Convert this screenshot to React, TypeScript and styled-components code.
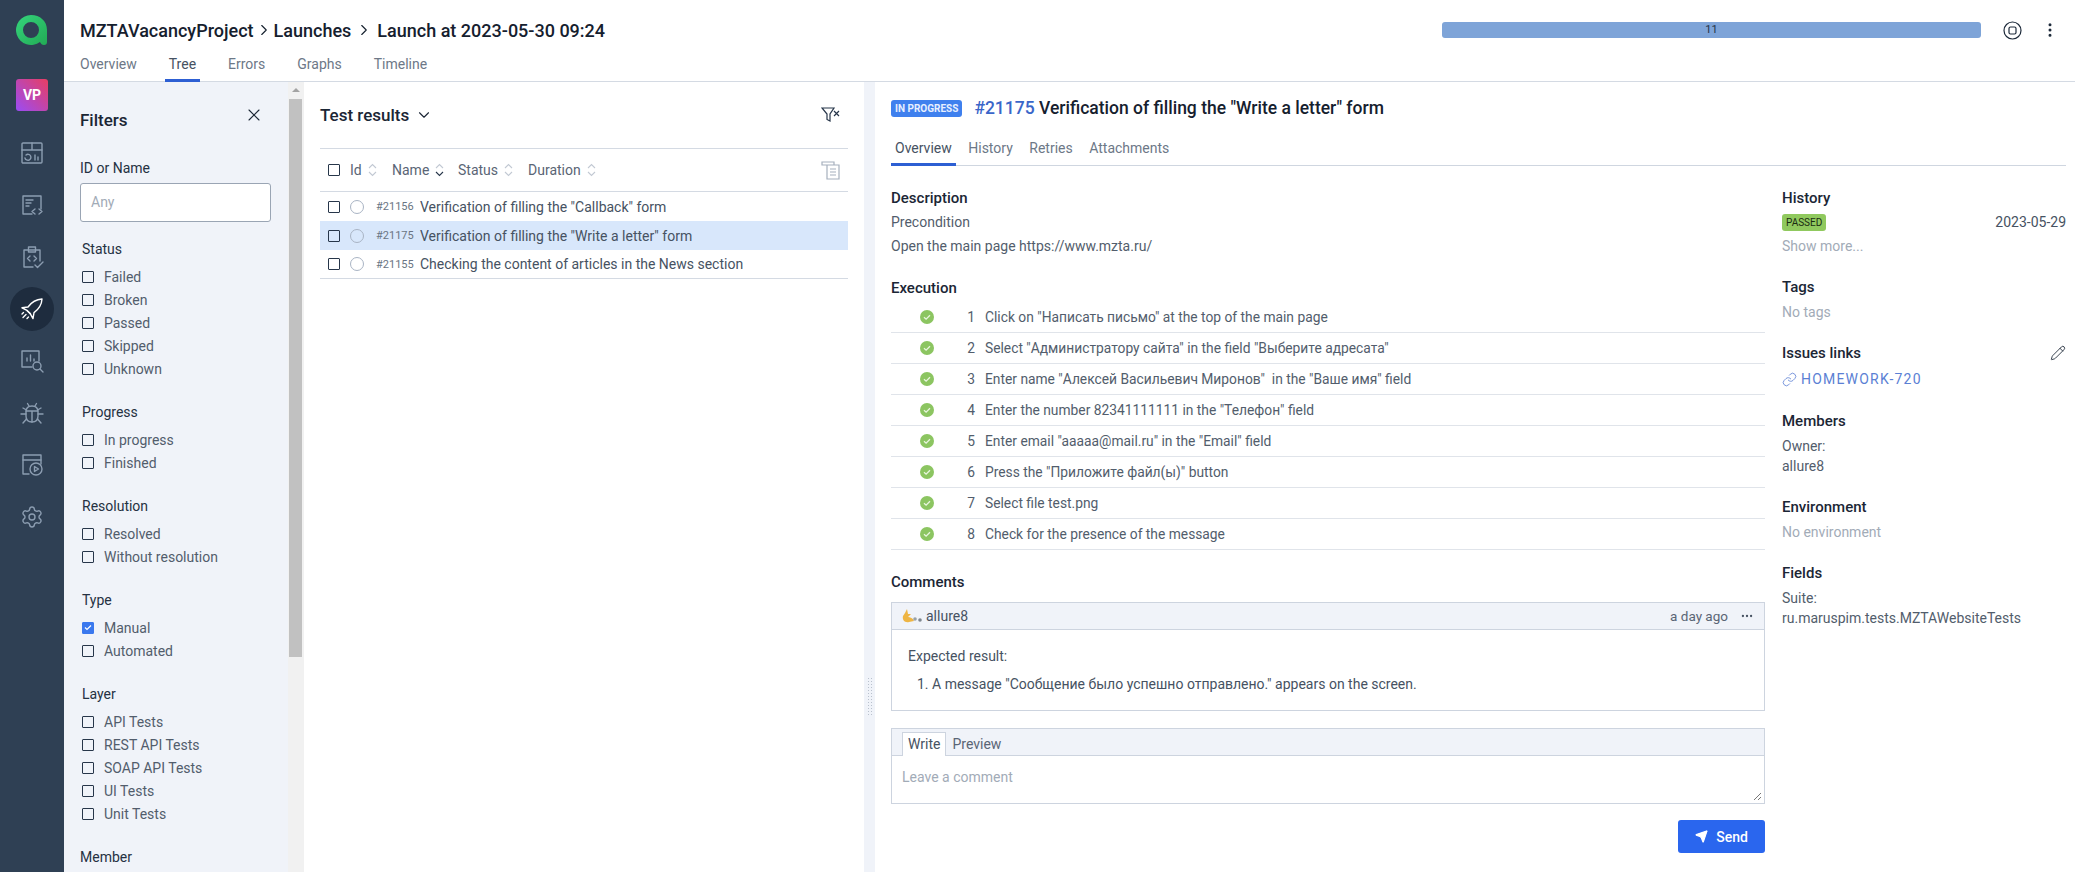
import React from 'react';
import styled, { createGlobalStyle } from 'styled-components';
import { Settings, X, ChevronDown, ChevronRight, MoreVertical, MoreHorizontal, Pencil, Link as LinkIcon, Send as SendIcon } from 'lucide-react';

const GlobalStyle = createGlobalStyle`
  html, body, #root { margin: 0; height: 100%; overflow: hidden; }
  body { font-family: Roboto, "Noto Sans", sans-serif; font-size: 14px; color: #465262; background: #fff; }
  * { box-sizing: border-box; }
`;

const Shell = styled.div`
  display: flex;
  height: 872px;
`;
const SideNav = styled.nav`
  flex: 0 0 64px;
  background: #2f4054;
  display: flex;
  flex-direction: column;
  align-items: center;
  padding-top: 12px;
`;
const Logo = styled.div`
  height: 36px;
  margin-bottom: 31px;
`;
const ProjectBadge = styled.div`
  width: 32px;
  height: 32px;
  border-radius: 3px;
  background: linear-gradient(45deg, #9a4cf5, #e83e62);
  color: #fff;
  font-size: 14px;
  font-weight: 700;
  display: flex;
  align-items: center;
  justify-content: center;
  margin-bottom: 20px;
`;
const NavItem = styled.div<{ $active?: boolean }>`
  width: 44px;
  height: 44px;
  margin-bottom: 8px;
  border-radius: 50%;
  display: flex;
  align-items: center;
  justify-content: center;
  color: ${(p) => (p.$active ? '#fff' : '#8c9db1')};
  background: ${(p) => (p.$active ? '#1e2c3e' : 'transparent')};
`;
const Main = styled.div`
  flex: 1;
  min-width: 0;
  display: flex;
  flex-direction: column;
`;
const Header = styled.header`
  height: 82px;
  flex: none;
  border-bottom: 1px solid #d4dae3;
  padding: 18px 16px 0;
`;
const TopRow = styled.div`
  display: flex;
  align-items: center;
  height: 24px;
`;
const Crumbs = styled.div`
  display: flex;
  align-items: center;
  gap: 1px;
  flex: 1;
  font-size: 18px;
  font-weight: 500;
  color: #15202e;
`;
const CrumbArrow = styled(ChevronRight)`
  & ~ & { margin: 0 3px; }
`;
const Progress = styled.div`
  width: 539px;
  height: 16px;
  background: #7ea4d8;
  border-radius: 3px;
  font-size: 11px;
  color: #253245;
  text-align: center;
  line-height: 16px;
`;
const HeadAction = styled.div<{ $gap: number }>`
  display: flex;
  color: #1d2a3a;
  margin-left: ${(p) => p.$gap}px;
`;
const NavTabs = styled.div`
  display: flex;
  gap: 24px;
  margin-top: 9px;
  margin-left: -4px;
`;
const NavTab = styled.div<{ $active?: boolean }>`
  height: 31px;
  padding: 4px 4px 0;
  line-height: 18px;
  color: ${(p) => (p.$active ? '#465262' : '#6d7887')};
  border-bottom: 3px solid ${(p) => (p.$active ? '#2d5fd3' : 'transparent')};
`;
const Body = styled.div`
  flex: 1;
  min-height: 0;
  display: flex;
`;
const Filters = styled.aside`
  flex: 0 0 224px;
  background: #f0f3f9;
  overflow: hidden;
  padding: 28px 16px 0;
`;
const ScrollTrack = styled.div`
  flex: 0 0 16px;
  background: #f1f1f1;
  padding-left: 1px;
`;
const ScrollArrow = styled.div`
  width: 0;
  height: 0;
  margin: 6px 0 7px 3px;
  border-left: 4px solid transparent;
  border-right: 4px solid transparent;
  border-bottom: 4px solid #a3a3a3;
`;
const ScrollThumb = styled.div`
  width: 13px;
  height: 558px;
  background: #c1c1c1;
`;
const FiltersHead = styled.div`
  display: flex;
  justify-content: space-between;
  align-items: flex-start;
  height: 20px;
  padding-right: 8px;
  font-size: 17px;
  font-weight: 500;
  line-height: 20px;
  color: #1b2635;
  svg { margin-top: -5px; }
`;
const FieldLabel = styled.div`
  margin-top: 30px;
  line-height: 16px;
  color: #253142;
`;
const MemberLabel = styled(FieldLabel)`
  margin-top: 0;
`;
const SearchInput = styled.div`
  margin-top: 7px;
  width: 191px;
  height: 39px;
  background: #fff;
  border: 1px solid #9aa5b4;
  border-radius: 3px;
  padding-left: 10px;
  line-height: 37px;
  color: #a2abb7;
`;
const GroupList = styled.div`
  margin-top: 19px;
`;
const Group = styled.div`
  padding: 0 0 24px 2px;
`;
const GroupTitle = styled.div`
  line-height: 16px;
  margin-bottom: 8px;
  color: #253142;
`;
const CheckRow = styled.label`
  height: 23px;
  display: flex;
  align-items: center;
  gap: 10px;
  color: #525d6c;
`;
const Box = styled.span<{ $checked?: boolean }>`
  flex: none;
  width: 12px;
  height: 12px;
  border: 1px solid ${(p) => (p.$checked ? '#3a78ee' : '#27364a')};
  border-radius: 1px;
  background: ${(p) => (p.$checked ? '#3a78ee' : 'transparent')};
  display: inline-flex;
  align-items: center;
  justify-content: center;
`;
const ListPane = styled.section`
  flex: 0 0 560px;
  padding: 21px 16px 0;
`;
const ListHead = styled.div`
  display: flex;
  align-items: center;
  height: 24px;
  margin-bottom: 21px;
  font-size: 17px;
  font-weight: 500;
  color: #1b2635;
  gap: 6px;
`;
const ListHeadIcon = styled.div`
  margin-left: auto;
  margin-right: 8px;
  display: flex;
`;
const ColumnRow = styled.div`
  display: flex;
  align-items: center;
  height: 44px;
  border-top: 1px solid #d4dae3;
  border-bottom: 1px solid #d4dae3;
  padding-left: 8px;
  color: #5a6575;
`;
const Column = styled.span<{ $w: number }>`
  display: inline-flex;
  align-items: center;
  gap: 6px;
  width: ${(p) => p.$w}px;
`;
const TestRow = styled.div<{ $selected?: boolean }>`
  display: flex;
  align-items: center;
  height: 29px;
  padding-left: 8px;
  background: ${(p) => (p.$selected ? '#d8e7fb' : 'transparent')};
  &:last-child { border-bottom: 1px solid #d4dae3; }
`;
const Ring = styled.span`
  flex: none;
  width: 14px;
  height: 14px;
  border: 1px solid #a9b4c4;
  border-radius: 50%;
  margin: 0 12px 0 10px;
`;
const TestId = styled.span`
  font-size: 11px;
  width: 44px;
  color: #6a7583;
`;
const Splitter = styled.div`
  flex: 0 0 11px;
  background: #f0f3f9;
  padding: 595px 0 0 3px;
`;
const Grip = styled.div`
  width: 6px;
  height: 39px;
  background-image: radial-gradient(#b9c1cd 1px, transparent 1px);
  background-size: 3px 3px;
`;
const Detail = styled.section`
  flex: 1;
  min-width: 0;
  padding: 14px 9px 0 16px;
`;
const DetailTitle = styled.div`
  display: flex;
  align-items: center;
  height: 24px;
  gap: 12px;
  font-size: 17.5px;
  font-weight: 500;
  color: #15202e;
`;
const StatusBadge = styled.span<{ $passed?: boolean }>`
  display: inline-block;
  height: 17px;
  padding: 0 4px;
  border-radius: 3px;
  font-size: 10px;
  line-height: 17px;
  font-weight: ${(p) => (p.$passed ? 400 : 700)};
  background: ${(p) => (p.$passed ? '#90c95e' : '#3f80ee')};
  color: ${(p) => (p.$passed ? '#1b2d12' : '#e6efff')};
`;
const IdLink = styled.span`
  color: #3a66c9;
`;
const DetailTabs = styled.div`
  display: flex;
  gap: 8.5px;
  height: 34px;
  margin-top: 12px;
  border-bottom: 1px solid #cfd6e0;
`;
const DetailTab = styled.div<{ $active?: boolean }>`
  height: 34px;
  padding: 7px 4px 0;
  line-height: 18px;
  color: ${(p) => (p.$active ? '#465262' : '#6d7887')};
  border-bottom: 3px solid ${(p) => (p.$active ? '#2d5fd3' : 'transparent')};
`;
const Columns = styled.div`
  display: grid;
  grid-template-columns: 874px 284px;
  gap: 17px;
  padding-top: 23px;
`;
const Heading = styled.div`
  font-size: 15px;
  font-weight: 500;
  line-height: 18px;
  color: #1b2635;
`;
const Line = styled.div`
  line-height: 24px;
  color: #525d6c;
`;
const BlockHeading = styled(Heading)`
  margin-bottom: 3px;
`;
const SpacedHeading = styled(Heading)`
  margin-top: 21px;
`;
const Steps = styled.div`
  margin-top: 5px;
`;
const Step = styled.div`
  display: flex;
  align-items: center;
  height: 31px;
  border-bottom: 1px solid #e0e4ea;
  font-size: 13.8px;
  color: #525d6c;
`;
const StepDot = styled.span`
  flex: none;
  width: 14px;
  height: 14px;
  margin-left: 29px;
  display: flex;
`;
const StepNum = styled.span`
  flex: none;
  width: 29px;
  margin: 0 10px 0 12px;
  text-align: right;
`;
const StepText = styled.span`
  white-space: pre;
`;
const CommentHeading = styled(Heading)`
  margin-top: 23px;
  margin-bottom: 11px;
`;
const Panel = styled.div`
  border: 1px solid #cdd4df;
`;
const PanelHead = styled.div`
  display: flex;
  align-items: center;
  height: 27px;
  background: #f0f3f9;
  border-bottom: 1px solid #cdd4df;
  padding: 0 10px 0 10px;
  gap: 3px;
`;
const Ago = styled.span`
  margin-left: auto;
  font-size: 13.5px;
  color: #5a6575;
  margin-right: 9px;
`;
const CommentBody = styled.div`
  height: 80px;
  padding: 18px 0 0 16px;
  line-height: 16px;
`;
const Ordered = styled.div`
  padding-left: 9px;
  margin-top: 12px;
`;
const Editor = styled(Panel)`
  margin-top: 17px;
  height: 76px;
  position: relative;
`;
const EditorHead = styled.div`
  display: flex;
  height: 27px;
  background: #f0f3f9;
  border-bottom: 1px solid #cdd4df;
  padding: 3px 0 0 10px;
`;
const EditorTab = styled.div<{ $active?: boolean }>`
  height: 24px;
  padding: 0 5px;
  line-height: 23px;
  color: ${(p) => (p.$active ? '#465262' : '#5a6575')};
  background: ${(p) => (p.$active ? '#fff' : 'transparent')};
  border: 1px solid ${(p) => (p.$active ? '#cdd4df' : 'transparent')};
  border-bottom: none;
`;
const Placeholder = styled.div`
  padding: 13px 10px;
  line-height: 16px;
  color: #a2abb7;
`;
const Resize = styled.svg`
  position: absolute;
  right: 2px;
  bottom: 2px;
`;
const Actions = styled.div`
  display: flex;
  justify-content: flex-end;
  margin-top: 16px;
`;
const SendButton = styled.button`
  width: 87px;
  height: 33px;
  border: 0;
  border-radius: 3px;
  background: #2a66ee;
  color: #fff;
  font: 500 14px Roboto, sans-serif;
  display: flex;
  align-items: center;
  justify-content: center;
  gap: 8px;
`;
const Section = styled.div`
  margin-bottom: 22px;
`;
const SectionHead = styled(Heading)`
  display: flex;
  justify-content: space-between;
  align-items: center;
  margin-bottom: 6px;
`;
const Value = styled.div<{ $muted?: boolean }>`
  line-height: 20px;
  color: ${(p) => (p.$muted ? '#a2abb7' : '#525d6c')};
`;
const HistoryRow = styled.div`
  display: flex;
  justify-content: space-between;
  align-items: center;
  height: 20px;
  margin: -1px 0 4px;
`;
const IssueLink = styled.div`
  display: flex;
  align-items: center;
  gap: 4px;
  margin: 7px 0 23px;
  line-height: 20px;
  letter-spacing: 1.2px;
  color: #5b7fd4;
`;

const stroke = { fill: 'none', stroke: 'currentColor', strokeWidth: 1.4, strokeLinecap: 'round' as const, strokeLinejoin: 'round' as const };

const DashIcon = () => (
  <svg width="24" height="24" viewBox="0 0 24 24" {...stroke}>
    <rect x="2" y="2" width="20" height="20" rx="1" /><path d="M2 9h20M12 2v7" />
    <path d="M6 14a3 3 0 1 1-1 3M15 14v5M18 16v3" />
  </svg>
);
const CodeDocIcon = () => (
  <svg width="24" height="24" viewBox="0 0 24 24" {...stroke}>
    <path d="M12 21H3V3h18v13" /><path d="M6 7h7M6 10h5M6 13h3" /><path d="M15 16l-3 2.5 3 2.5M19 16l3 2.5-3 2.5" />
  </svg>
);
const ClipIcon = () => (
  <svg width="24" height="24" viewBox="0 0 24 24" {...stroke}>
    <path d="M13 22H4V5h16v11" /><rect x="8.500" y="2" width="7" height="5" />
    <path d="M10 11l-2.500 2.500L10 16M14 11l2.500 2.500L14 16" /><path d="M15 20l2.500 2.500L23 17" />
  </svg>
);
const RocketIcon = () => (
  <svg width="24" height="24" viewBox="0 0 24 24" {...stroke}>
    <path d="M22 2c-6 .3-10 2.500-14 8l-6 .8 5 2.600 3.200 3.200 2.800 5 1-6c5.500-4 7.700-8 8-13.600z" />
    <path d="M7 13.500L10.500 17" /><path d="M6 17.500l-3 3M3.500 15.500l-1.500 1.500M8.500 20l-1.500 1.500" />
  </svg>
);
const SearchChartIcon = () => (
  <svg width="24" height="24" viewBox="0 0 24 24" {...stroke}>
    <path d="M12 18H2V2h17v10" /><path d="M7 12V9M10.500 12V6M14 12v-2" />
    <circle cx="17" cy="17" r="4" /><path d="M20 20l3 3" />
  </svg>
);
const BugIcon = () => (
  <svg width="24" height="24" viewBox="0 0 24 24" {...stroke}>
    <path d="M6 11c0-4 2.500-6 6-6s6 2 6 6v4c0 4-2.500 6-6 6s-6-2-6-6z" /><path d="M12 10v11M6 10h12" />
    <path d="M9 5L7.500 2.500M15 5l1.500-2.500M6 13H1M18 13h5M6.500 9L3 7M17.500 9L21 7M6.500 18L3 22M17.500 18L21 22" />
  </svg>
);
const PlayIcon = () => (
  <svg width="24" height="24" viewBox="0 0 24 24" {...stroke}>
    <path d="M9 21H3V2h18v9" /><path d="M3 7h18" />
    <circle cx="16" cy="16" r="6" /><path d="M14.500 13.500v5l4-2.500z" />
  </svg>
);
const LogoMark = () => (
  <svg width="36" height="36" viewBox="0 0 36 36">
    <defs>
      <linearGradient id="logoGreen" x1="0" y1="0" x2="1" y2="1">
        <stop offset="0" stopColor="#35d47c" /><stop offset="1" stopColor="#22ab55" />
      </linearGradient>
    </defs>
    <path d="M17 3a15 15 0 1 0 9 27c1 2 2 3 4 3 2 0 3-1 3-3V18C33 9 26 3 17 3zm0 7a8 8 0 1 1 0 16 8 8 0 0 1 0-16z" fill="url(#logoGreen)" />
  </svg>
);
const SortIcon = ({ active }: { active?: boolean }) => (
  <svg width="9" height="14" viewBox="0 0 9 14" fill="none" stroke={active ? '#27364a' : '#c2c9d3'} strokeWidth="1.100">
    <path d="M1 5l3.500-3.500L8 5" stroke="#c2c9d3" /><path d="M1 9l3.500 3.500L8 9" />
  </svg>
);
const FilterOff = () => (
  <svg width="19" height="18" viewBox="0 0 19 18" fill="none" stroke="#27364a" strokeWidth="1.200">
    <path d="M1 2h12L9 8v7l-3-1.500V8z" /><path d="M13 5l5 5M18 5l-5 5" />
  </svg>
);
const ColumnsIcon = () => (
  <svg width="19" height="19" viewBox="0 0 19 19" fill="none" stroke="#a6b0bd" strokeWidth="1.200">
    <path d="M1 1h12v3H1zM6 4h12v14H6zM9 8h6M9 11h6M9 14h6" />
  </svg>
);
const StopIcon = () => (
  <svg width="19" height="19" viewBox="0 0 19 19" fill="none" stroke="#1d2a3a" strokeWidth="1.200">
    <circle cx="9.500" cy="9.500" r="8.500" /><rect x="6" y="6" width="7" height="7" rx="1.500" />
  </svg>
);
const StepOk = () => (
  <svg width="14" height="14" viewBox="0 0 14 14">
    <circle cx="7" cy="7" r="7" fill="#8cc561" /><path d="M4 7.200l2.100 2L10 5.200" fill="none" stroke="#e9f5df" strokeWidth="1.300" />
  </svg>
);
const Avatar = () => (
  <svg width="21" height="16" viewBox="0 0 21 16">
    <path d="M5 1L3 5 1 8c-1 4 2 7 6 6l5-1c-1-3-4-4-6-4l3-3-3 0z" fill="#eeb544" />
    <circle cx="13" cy="11" r="1.800" fill="#98a1a8" /><circle cx="18" cy="12" r="1.800" fill="#7d868e" />
  </svg>
);
const Tick = () => (
  <svg width="8" height="7" viewBox="0 0 8 7" fill="none" stroke="#fff" strokeWidth="1.200"><path d="M1 3.500l2 2 4-4" /></svg>
);

const filterGroups: { title: string; items: string[] }[] = [
  { title: 'Status', items: ['Failed', 'Broken', 'Passed', 'Skipped', 'Unknown'] },
  { title: 'Progress', items: ['In progress', 'Finished'] },
  { title: 'Resolution', items: ['Resolved', 'Without resolution'] },
  { title: 'Type', items: ['Manual', 'Automated'] },
  { title: 'Layer', items: ['API Tests', 'REST API Tests', 'SOAP API Tests', 'UI Tests', 'Unit Tests'] },
];

const tests = [
  { id: '#21156', name: 'Verification of filling the "Callback" form' },
  { id: '#21175', name: 'Verification of filling the "Write a letter" form', selected: true },
  { id: '#21155', name: 'Checking the content of articles in the News section' },
];

const steps = [
  'Click on "Написать письмо" at the top of the main page',
  'Select "Администратору сайта" in the field "Выберите адресата"',
  'Enter name "Алексей Васильевич Миронов"  in the "Ваше имя" field',
  'Enter the number 82341111111 in the "Телефон" field',
  'Enter email "aaaaa@mail.ru" in the "Email" field',
  'Press the "Приложите файл(ы)" button',
  'Select file test.png',
  'Check for the presence of the message',
];

const App = (): React.ReactElement => (
  <Shell>
    <GlobalStyle />
    <SideNav>
      <Logo><LogoMark /></Logo>
      <ProjectBadge>VP</ProjectBadge>
      <NavItem><DashIcon /></NavItem>
      <NavItem><CodeDocIcon /></NavItem>
      <NavItem><ClipIcon /></NavItem>
      <NavItem $active><RocketIcon /></NavItem>
      <NavItem><SearchChartIcon /></NavItem>
      <NavItem><BugIcon /></NavItem>
      <NavItem><PlayIcon /></NavItem>
      <NavItem><Settings size={24} strokeWidth={1.4} /></NavItem>
    </SideNav>
    <Main>
      <Header>
        <TopRow>
          <Crumbs>
            MZTAVacancyProject <CrumbArrow size={18} strokeWidth={1.5} /> Launches <CrumbArrow size={18} strokeWidth={1.5} /> Launch at 2023-05-30 09:24
          </Crumbs>
          <Progress>11</Progress>
          <HeadAction $gap={22}><StopIcon /></HeadAction>
          <HeadAction $gap={19}><MoreVertical size={18} strokeWidth={2} /></HeadAction>
        </TopRow>
        <NavTabs>
          <NavTab>Overview</NavTab>
          <NavTab $active>Tree</NavTab>
          <NavTab>Errors</NavTab>
          <NavTab>Graphs</NavTab>
          <NavTab>Timeline</NavTab>
        </NavTabs>
      </Header>
      <Body>
        <Filters>
          <FiltersHead>
            Filters
            <X size={20} strokeWidth={1.3} />
          </FiltersHead>
          <FieldLabel>ID or Name</FieldLabel>
          <SearchInput>Any</SearchInput>
          <GroupList>
            {filterGroups.map((group) => (
              <Group key={group.title}>
                <GroupTitle>{group.title}</GroupTitle>
                {group.items.map((item) => (
                  <CheckRow key={item}>
                    <Box $checked={item === 'Manual'}>{item === 'Manual' && <Tick />}</Box>
                    {item}
                  </CheckRow>
                ))}
              </Group>
            ))}
          </GroupList>
          <MemberLabel>Member</MemberLabel>
        </Filters>
        <ScrollTrack>
          <ScrollArrow />
          <ScrollThumb />
        </ScrollTrack>
        <ListPane>
          <ListHead>
            Test results <ChevronDown size={18} strokeWidth={1.5} />
            <ListHeadIcon><FilterOff /></ListHeadIcon>
          </ListHead>
          <ColumnRow>
            <Box />
            <Column $w={10} />
            <Column $w={42}>Id <SortIcon /></Column>
            <Column $w={66}>Name <SortIcon active /></Column>
            <Column $w={70}>Status <SortIcon /></Column>
            <Column $w={80}>Duration <SortIcon /></Column>
            <ListHeadIcon><ColumnsIcon /></ListHeadIcon>
          </ColumnRow>
          <div>
            {tests.map((test) => (
              <TestRow key={test.id} $selected={test.selected}>
                <Box />
                <Ring />
                <TestId>{test.id}</TestId>
                {test.name}
              </TestRow>
            ))}
          </div>
        </ListPane>
        <Splitter><Grip /></Splitter>
        <Detail>
          <DetailTitle>
            <StatusBadge>IN PROGRESS</StatusBadge>
            <span><IdLink>#21175</IdLink> Verification of filling the "Write a letter" form</span>
          </DetailTitle>
          <DetailTabs>
            <DetailTab $active>Overview</DetailTab>
            <DetailTab>History</DetailTab>
            <DetailTab>Retries</DetailTab>
            <DetailTab>Attachments</DetailTab>
          </DetailTabs>
          <Columns>
            <div>
              <BlockHeading>Description</BlockHeading>
              <Line>Precondition</Line>
              <Line>Open the main page https://www.mzta.ru/</Line>
              <SpacedHeading>Execution</SpacedHeading>
              <Steps>
                {steps.map((step, index) => (
                  <Step key={step}>
                    <StepDot><StepOk /></StepDot>
                    <StepNum>{index + 1}</StepNum>
                    <StepText>{step}</StepText>
                  </Step>
                ))}
              </Steps>
              <CommentHeading>Comments</CommentHeading>
              <Panel>
                <PanelHead>
                  <Avatar />
                  allure8
                  <Ago>a day ago</Ago>
                  <MoreHorizontal size={14} />
                </PanelHead>
                <CommentBody>
                  Expected result:
                  <Ordered>1. A message "Сообщение было успешно отправлено." appears on the screen.</Ordered>
                </CommentBody>
              </Panel>
              <Editor>
                <EditorHead>
                  <EditorTab $active>Write</EditorTab>
                  <EditorTab>Preview</EditorTab>
                </EditorHead>
                <Placeholder>Leave a comment</Placeholder>
                <Resize width="9" height="9" viewBox="0 0 9 9" stroke="#777" fill="none">
                  <path d="M8 1L1 8M8 5L5 8" />
                </Resize>
              </Editor>
              <Actions>
                <SendButton><SendIcon size={13} fill="#fff" />Send</SendButton>
              </Actions>
            </div>
            <div>
              <Section>
                <SectionHead>History</SectionHead>
                <HistoryRow>
                  <StatusBadge $passed>PASSED</StatusBadge>
                  <span>2023-05-29</span>
                </HistoryRow>
                <Value $muted>Show more...</Value>
              </Section>
              <Section>
                <SectionHead>Tags</SectionHead>
                <Value $muted>No tags</Value>
              </Section>
              <div>
                <SectionHead>
                  Issues links
                  <Pencil size={16} strokeWidth={1.3} />
                </SectionHead>
                <IssueLink><LinkIcon size={15} strokeWidth={1.3} />HOMEWORK-720</IssueLink>
              </div>
              <Section>
                <SectionHead>Members</SectionHead>
                <Value>Owner:</Value>
                <Value>allure8</Value>
              </Section>
              <Section>
                <SectionHead>Environment</SectionHead>
                <Value $muted>No environment</Value>
              </Section>
              <Section>
                <SectionHead>Fields</SectionHead>
                <Value>Suite:</Value>
                <Value>ru.maruspim.tests.MZTAWebsiteTests</Value>
              </Section>
            </div>
          </Columns>
        </Detail>
      </Body>
    </Main>
  </Shell>
);

export default App;
